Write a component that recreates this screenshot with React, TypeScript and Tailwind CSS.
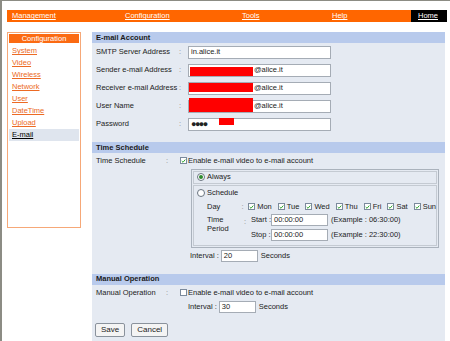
import React from 'react';

const navItems = [
  { label: 'Management', w: 'w-[118px] pl-[5px]' },
  { label: 'Configuration', w: 'w-[117px]' },
  { label: 'Tools', w: 'w-[90px]' },
  { label: 'Help', w: 'w-[79px]' },
];

const sideLinks = ['System', 'Video', 'Wireless', 'Network', 'User', 'DateTime', 'Upload'];
const days = ['Mon', 'Tue', 'Wed', 'Thu', 'Fri', 'Sat', 'Sun'];

const Check: React.FC<{ on?: boolean }> = ({ on }) => (
  <span className="inline-flex w-[7px] h-[7px] shrink-0 items-center justify-center border border-[#7b8a9c] bg-white">
    {on && (
      <svg viewBox="0 0 7 7" className="w-[6px] h-[6px]">
        <path d="M1 3.5 L2.8 5.3 L6 1.5" stroke="#22a022" strokeWidth="1.3" fill="none" />
      </svg>
    )}
  </span>
);

const Radio: React.FC<{ on?: boolean }> = ({ on }) => (
  <span className="inline-flex w-[8px] h-[8px] shrink-0 items-center justify-center rounded-full border border-[#6a7480] bg-white">
    {on && <span className="w-[4px] h-[4px] rounded-full bg-[#2c8a2c]" />}
  </span>
);

const Field: React.FC<{ className?: string; children?: React.ReactNode }> = ({ className = '', children }) => (
  <div className={`relative flex items-center bg-white border border-[#a5acb5] pl-[2px] ${className}`}>{children}</div>
);

const Redact: React.FC<{ className: string }> = ({ className }) => <span className={`absolute bg-[#ff0000] ${className}`} />;

const SectionHead: React.FC<{ title: string }> = ({ title }) => (
  <div className="h-[11px] flex items-center pl-[4px] bg-[#b8caec] font-bold text-[#1a1a1a]">{title}</div>
);

const App: React.FC = () => {
  const accountRows = [
    { label: 'SMTP Server Address', content: <span>in.alice.it</span> },
    { label: 'Sender e-mail Address', content: <><Redact className="left-[1px] top-[2px] w-[63px] h-[9px]" /><span className="ml-[63px]">@alice.it</span></> },
    { label: 'Receiver e-mail Address', content: <><Redact className="left-[0px] top-[0px] w-[64px] h-[9px]" /><span className="ml-[63px]">@alice.it</span></> },
    { label: 'User Name', content: <><Redact className="left-[0px] top-[-3px] w-[64px] h-[14px]" /><span className="ml-[63px]">@alice.it</span></> },
    { label: 'Password', content: <><span className="text-[9px] tracking-[-1.5px]">●●●●</span><Redact className="left-[30px] top-[-1px] w-[15px] h-[7px]" /></> },
  ];

  return (
    <div className="w-[450px] h-[341px] overflow-hidden bg-white border-l-2 border-t border-[#8c8c84] font-['Liberation_Sans',Arial,sans-serif] text-[7.5px] leading-none text-[#222]">
      {/* Top nav */}
      <div className="mt-[9px] ml-[5px] w-[440px] h-[12px] flex items-center bg-[#ff6600]">
        {navItems.map(n => (
          <div key={n.label} className={`${n.w} text-white underline`}>{n.label}</div>
        ))}
        <div className="w-[36px] h-full flex items-center pl-[7px] bg-black text-white underline">Home</div>
      </div>

      <div className="mt-[10px] flex items-start">
        {/* Sidebar */}
        <div className="ml-[5px] w-[74px] h-[196px] border border-[#f6a878] p-[1px]">
          <div className="h-[9px] flex items-center justify-center bg-[#fb6a12] text-white">Configuration</div>
          <div className="mt-[2px]">
            {sideLinks.map(l => (
              <div key={l} className="h-[12px] flex items-center pl-[3px] text-[#ec6a24] underline">{l}</div>
            ))}
            <div className="h-[12px] flex items-center pl-[3px] bg-[#dfe5ee] text-black underline">E-mail</div>
          </div>
        </div>

        {/* Main */}
        <div className="ml-[11px] w-[353px] h-[310px] bg-[#e5eaf2]">
          <SectionHead title="E-mail Account" />
          {accountRows.map(r => (
            <div key={r.label} className="h-[18px] flex items-center">
              <span className="w-[87px] pl-[4px]">{r.label}</span>
              <span className="w-[9px] text-[#888]">:</span>
              <Field className="w-[143px] h-[13px]">{r.content}</Field>
            </div>
          ))}

          <div className="mt-[9px]"><SectionHead title="Time Schedule" /></div>
          <div className="flex items-start pt-[4px]">
            <span className="w-[74px] pl-[4px]">Time Schedule</span>
            <span className="w-[14px] text-[#888]">:</span>
            <div className="flex flex-col">
              <div className="flex items-center gap-[1px]"><Check on /><span>Enable e-mail video to e-mail account</span></div>
              <div className="ml-[11px] mt-[4px] w-[248px] border border-[#aab2bc] p-[1px]">
                <div className="h-[13px] flex items-center gap-[2px] pl-[3px] border border-[#c4cad2]"><Radio on /><span>Always</span></div>
                <div className="mt-[1px] border border-[#c4cad2] pl-[3px] pt-[2px] pb-[4px]">
                  <div className="h-[10px] flex items-center gap-[2px]"><Radio /><span>Schedule</span></div>
                  <div className="mt-[4px] ml-[10px] flex items-center h-[10px]">
                    <span className="w-[37px]">Day</span>
                    <span className="w-[7px] text-[#888]">:</span>
                    <div className="flex items-center gap-[6px]">
                      {days.map(d => (
                        <span key={d} className="flex items-center gap-[2px]"><Check on />{d}</span>
                      ))}
                    </div>
                  </div>
                  <div className="mt-[2px] ml-[10px] flex items-start">
                    <span className="w-[37px] pt-[1px] leading-[9px]">Time<br />Period</span>
                    <span className="w-[7px] pt-[4px] text-[#888]">:</span>
                    <div className="flex flex-col gap-[3px]">
                      <div className="flex items-center">
                        <span className="w-[19px] whitespace-nowrap">Start :</span>
                        <Field className="ml-[1px] w-[57px] h-[12px]">00:00:00</Field>
                        <span className="ml-[3px]">(Example : 06:30:00)</span>
                      </div>
                      <div className="flex items-center">
                        <span className="w-[19px] whitespace-nowrap">Stop :</span>
                        <Field className="ml-[1px] w-[57px] h-[12px]">00:00:00</Field>
                        <span className="ml-[3px]">(Example : 22:30:00)</span>
                      </div>
                    </div>
                  </div>
                </div>
              </div>
              <div className="ml-[10px] mt-[2px] flex items-center">
                <span>Interval :</span>
                <Field className="ml-[2px] w-[37px] h-[12px]">20</Field>
                <span className="ml-[3px]">Seconds</span>
              </div>
            </div>
          </div>

          <div className="mt-[12px]"><SectionHead title="Manual Operation" /></div>
          <div className="flex items-start pt-[4px]">
            <span className="w-[74px] pl-[4px]">Manual Operation</span>
            <span className="w-[14px] text-[#888]">:</span>
            <div className="flex flex-col">
              <div className="flex items-center gap-[1px]"><Check /><span>Enable e-mail video to e-mail account</span></div>
              <div className="ml-[8px] mt-[5px] flex items-center">
                <span>Interval :</span>
                <Field className="ml-[2px] w-[37px] h-[12px]">30</Field>
                <span className="ml-[3px]">Seconds</span>
              </div>
            </div>
          </div>

          <div className="mt-[10px] ml-[3px] flex gap-[6px]">
            <button className="h-[14px] px-[5px] border border-[#8a929c] rounded-[2px] bg-[#f4f4f4] text-[8px]">Save</button>
            <button className="h-[14px] px-[5px] border border-[#8a929c] rounded-[2px] bg-[#f4f4f4] text-[8px]">Cancel</button>
          </div>
        </div>
      </div>
    </div>
  );
};

export default App;
